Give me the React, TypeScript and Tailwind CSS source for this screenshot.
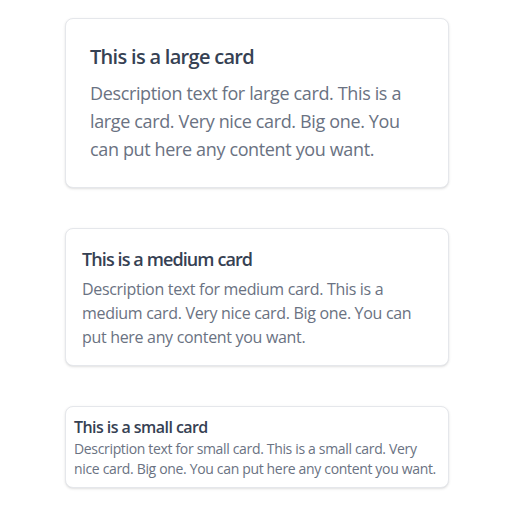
export default function App() {
  return (
    <div
      className="min-h-screen bg-white flex flex-col items-center gap-10 pt-[18px] pr-[3px]"
      style={{ fontFamily: '"Open Sans", "Noto Sans", sans-serif' }}
    >
      <div className="w-[384px] rounded-lg border border-gray-200 bg-white shadow-sm p-6">
        <h2 className="text-xl leading-7 font-semibold tracking-[-0.035em] text-gray-700">This is a large card</h2>
        <p className="mt-2 text-lg leading-7 tracking-[-0.02em] text-gray-500">
          Description text for large card. This is a large card. Very nice card. Big one. You can put here any content you want.
        </p>
      </div>
      <div className="w-[384px] rounded-lg border border-gray-200 bg-white shadow-sm p-4">
        <h2 className="text-lg leading-7 font-semibold tracking-[-0.05em] text-gray-700">This is a medium card</h2>
        <p className="mt-1 text-base leading-6 tracking-[-0.02em] text-gray-500">
          Description text for medium card. This is a medium card. Very nice card. Big one. You can put here any content you want.
        </p>
      </div>
      <div className="w-[384px] rounded-lg border border-gray-200 bg-white shadow-sm p-2">
        <h2 className="text-base leading-6 font-semibold tracking-[-0.035em] text-gray-700">This is a small card</h2>
        <p className="text-sm leading-5 tracking-[-0.024em] text-gray-500">
          Description text for small card. This is a small card. Very nice card. Big one. You can put here any content you want.
        </p>
      </div>
    </div>
  );
}
